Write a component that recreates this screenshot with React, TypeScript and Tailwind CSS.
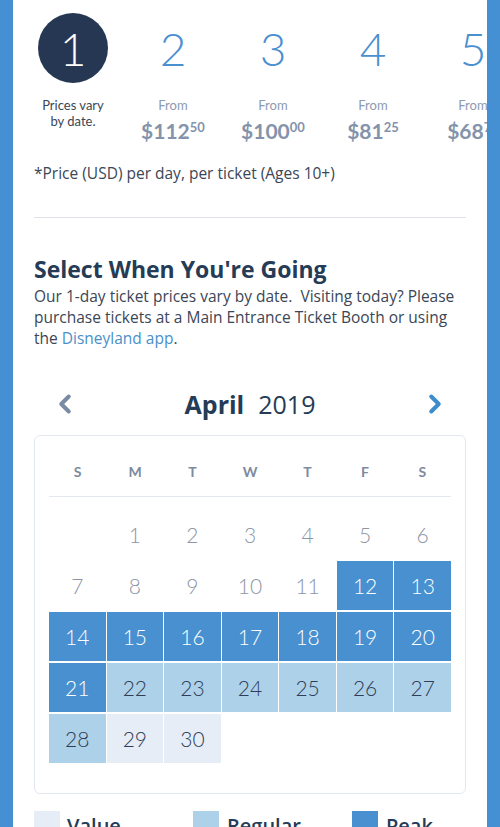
import { ChevronLeft, ChevronRight } from 'lucide-react';

type Tier = 'none' | 'value' | 'regular' | 'peak';

const steps = [
  { n: '2', dollars: '$112', cents: '50' },
  { n: '3', dollars: '$100', cents: '00' },
  { n: '4', dollars: '$81', cents: '25' },
  { n: '5', dollars: '$68', cents: '75' },
];

const days: { d: number | null; tier: Tier }[] = [
  { d: null, tier: 'none' },
  ...[1, 2, 3, 4, 5, 6, 7, 8, 9, 10, 11].map((d) => ({ d, tier: 'none' as Tier })),
  ...[12, 13, 14, 15, 16, 17, 18, 19, 20, 21].map((d) => ({ d, tier: 'peak' as Tier })),
  ...[22, 23, 24, 25, 26, 27, 28].map((d) => ({ d, tier: 'regular' as Tier })),
  { d: 29, tier: 'value' },
  { d: 30, tier: 'value' },
];

const tierClass: Record<Tier, string> = {
  none: 'text-[#8c96a5]',
  value: 'bg-[#e6edf7] text-[#2f3e56]',
  regular: 'bg-[#aed1ea] text-[#2f3e56]',
  peak: 'bg-[#4890d0] text-white',
};

const openSans = { fontFamily: '"Open Sans", Lato, sans-serif' };

export default function App() {
  return (
    <div
      className="h-[827px] w-full overflow-hidden bg-[#4590d2] px-[13px]"
      style={{ fontFamily: 'Lato, "Open Sans", sans-serif' }}
    >
      <div className="h-full overflow-hidden bg-white">
        {/* Ticket day steps */}
        <div className="flex pl-[10px] pt-[13px]">
          <div className="flex w-[100px] shrink-0 flex-col items-center">
            <div className="flex h-[70px] w-[70px] items-center justify-center rounded-full bg-[#253752] text-[46px] font-light text-white">
              1
            </div>
            <p className="mt-[14px] text-center text-[13px] leading-[16px] text-[#3b4656]">
              Prices vary
              <br />
              by date.
            </p>
          </div>
          {steps.map((s) => (
            <div key={s.n} className="flex w-[100px] shrink-0 flex-col items-center">
              <div className="flex h-[70px] items-center text-[46px] font-light text-[#4a90d0]">{s.n}</div>
              <p className="mt-[14px] text-[13px] leading-[16px] text-[#8d9bb0]">From</p>
              <div className="mt-[6px] flex items-start font-bold text-[#8493aa]">
                <span className="text-[21px] leading-[24px]">{s.dollars}</span>
                <span className="mt-[2px] text-[13px] leading-[13px]">{s.cents}</span>
              </div>
            </div>
          ))}
        </div>

        <div className="px-[21px]" style={openSans}>
          <p className="mt-[20px] text-[15.5px] leading-[20px] text-[#3b4656]">
            *Price (USD) per day, per ticket (Ages 10+)
          </p>
          <div className="mt-[34px] h-px bg-[#dfe3e8]" />

          {/* Intro */}
          <h2 className="mt-[37px] text-[23px] font-bold leading-[28px] text-[#253b56]">
            Select When You're Going
          </h2>
          <p className="mt-[3px] text-[15.5px] leading-[21px] text-[#3b4656]">
            Our 1-day ticket prices vary by date.&nbsp; Visiting today? Please
            <br />
            purchase tickets at a Main Entrance Ticket Booth or using
            <br />
            the <span className="text-[#4a90c8]">Disneyland app</span>.
          </p>

          {/* Month nav */}
          <div className="mt-[40px] flex items-center justify-between px-[16px]">
            <ChevronLeft className="h-[30px] w-[30px] text-[#7b8ba3]" strokeWidth={3.2} />
            <div className="text-[25px] leading-[30px] text-[#253b56]">
              <span className="font-bold">April</span>
              <span className="ml-[14px]">2019</span>
            </div>
            <ChevronRight className="h-[30px] w-[30px] text-[#3f8ccd]" strokeWidth={3.2} />
          </div>

          {/* Calendar */}
          <div
            className="mt-[16px] rounded-[6px] border border-[#e3e8ef] px-[14px] pb-[30px] pt-[24px]"
            style={{ fontFamily: 'Lato, "Open Sans", sans-serif' }}
          >
            <div className="grid grid-cols-7 border-b border-[#e3e8ef] pb-[12px]">
              {['S', 'M', 'T', 'W', 'T', 'F', 'S'].map((d, i) => (
                <div key={i} className="text-center text-[14px] font-bold leading-[24px] text-[#7d8aa0]">
                  {d}
                </div>
              ))}
            </div>
            <div className="mt-[13px] grid grid-cols-7 gap-x-px gap-y-[2px]">
              {days.map((c, i) => (
                <div
                  key={i}
                  className={`flex h-[49px] items-center justify-center text-[21px] font-light ${tierClass[c.tier]}`}
                >
                  {c.d}
                </div>
              ))}
            </div>
          </div>

          {/* Legend */}
          <div className="mt-[17px] flex">
            <div className="flex w-[159px] items-start gap-[7px]">
              <div className="h-[26px] w-[26px] bg-[#e6edf7]" />
              <span className="mt-[2px] text-[20px] font-semibold leading-[26px] text-[#253b56]">Value</span>
            </div>
            <div className="flex w-[159px] items-start gap-[8px]">
              <div className="h-[26px] w-[26px] bg-[#aed1ea]" />
              <span className="mt-[2px] text-[20px] font-semibold leading-[26px] text-[#253b56]">Regular</span>
            </div>
            <div className="flex items-start gap-[8px]">
              <div className="h-[26px] w-[26px] bg-[#4890d0]" />
              <span className="mt-[2px] text-[20px] font-semibold leading-[26px] text-[#253b56]">Peak</span>
            </div>
          </div>
        </div>
      </div>
    </div>
  );
}
